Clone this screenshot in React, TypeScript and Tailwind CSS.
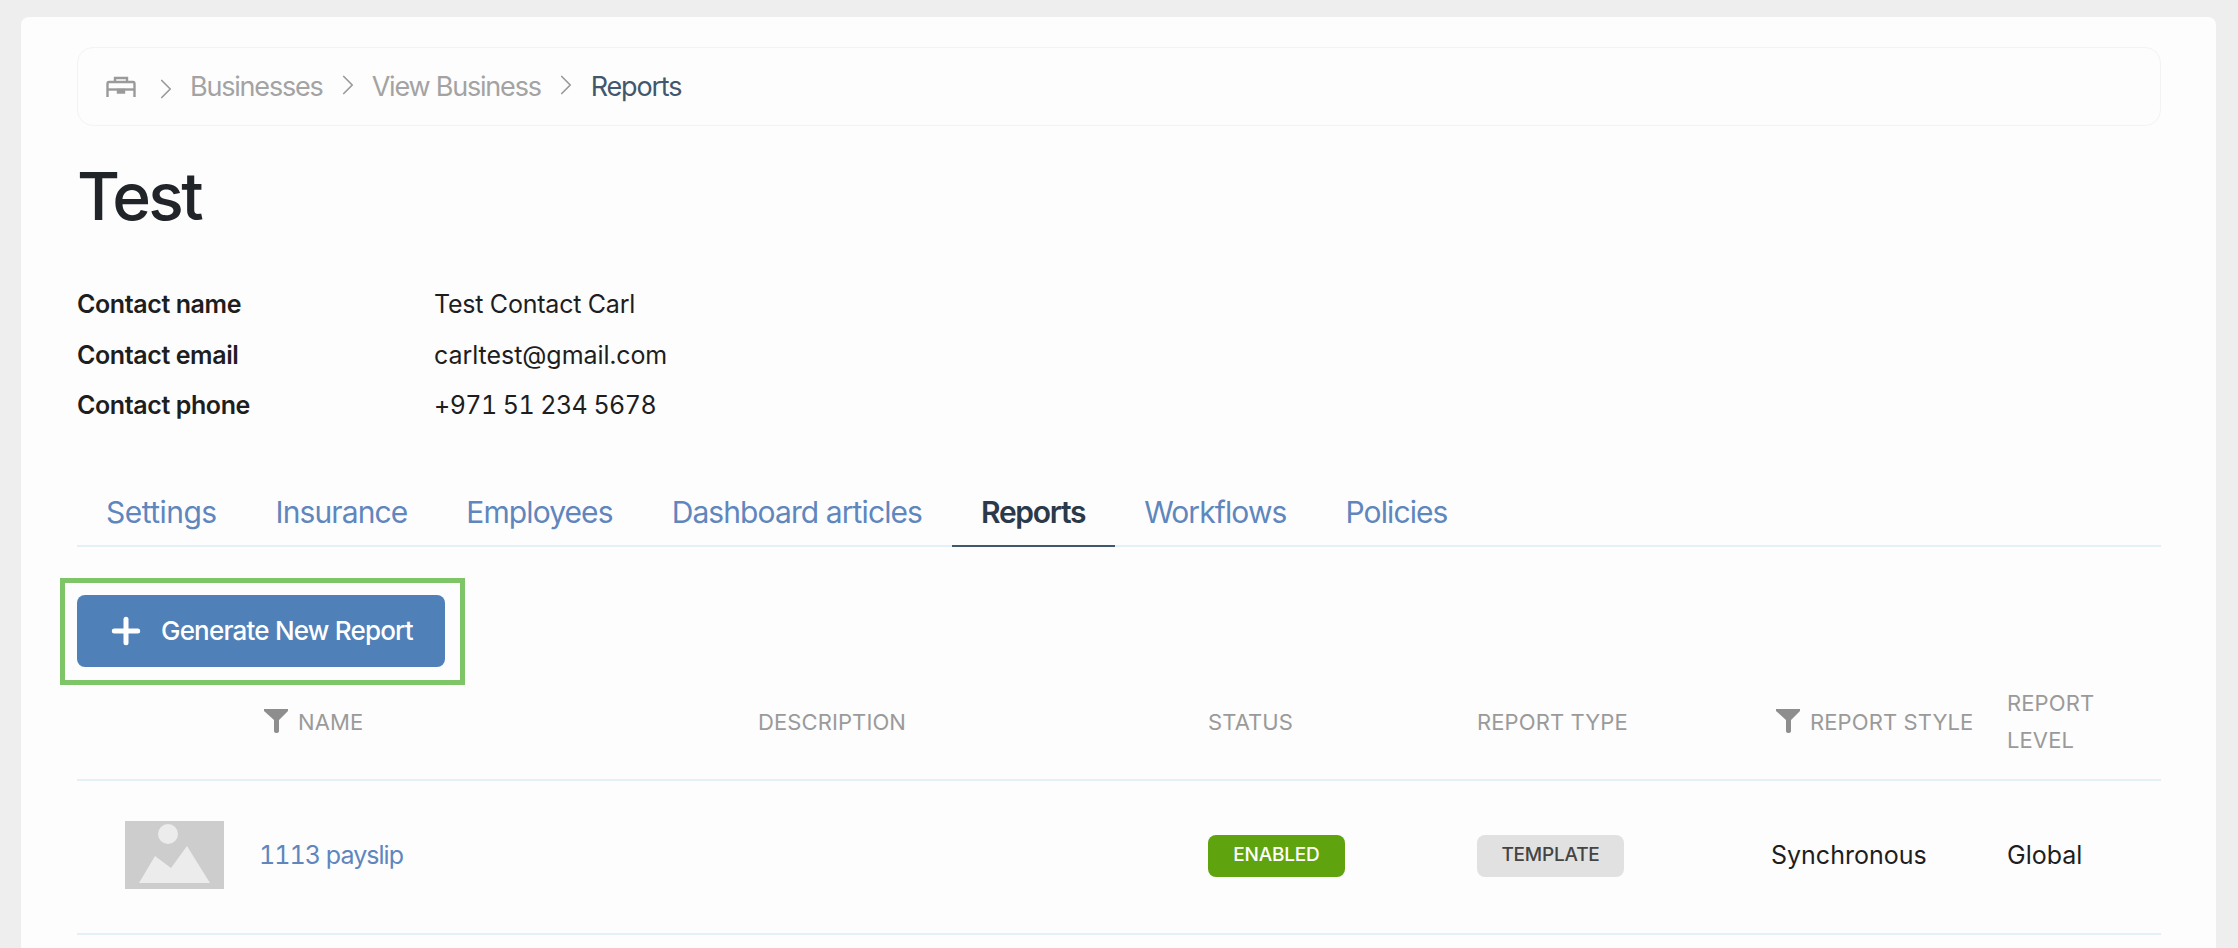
import { ChevronRight, Plus } from "lucide-react";

const tabs = ["Settings", "Insurance", "Employees", "Dashboard articles", "Reports", "Workflows", "Policies"];

const contacts = [
  { label: "Contact name", value: "Test Contact Carl", spacing: "tracking-[-0.2px]" },
  { label: "Contact email", value: "carltest@gmail.com", spacing: "tracking-[-0.05px]" },
  { label: "Contact phone", value: "+971 51 234 5678", spacing: "tracking-[-0.55px]" },
];

function FilterIcon() {
  return (
    <svg viewBox="0 0 24 24" className="h-[24px] w-[24px] shrink-0 -translate-y-[2px] fill-[#8e8e8e]">
      <path d="M0 0h24v2L15 11v11c0 1-1 2-2 2h-1c-1 0-2-1-2-2V11L0 2z" />
    </svg>
  );
}

function BagIcon() {
  return (
    <svg viewBox="0 0 30 22" className="h-[22px] w-[30px] fill-none stroke-[#9a9a9a] stroke-[2.4]">
      <path d="M9 6V2h12v4" />
      <path d="M1.5 21V8c0-1 .5-2 1.5-2h24c1 0 1.5 1 1.5 2v13" />
      <path d="M1.5 13.5h27" />
      <path d="M12 14h6v2.5h-6z" className="fill-[#9a9a9a]" />
    </svg>
  );
}

function Placeholder() {
  return (
    <svg viewBox="0 0 99 68" className="h-[68px] w-[99px]">
      <rect width="99" height="68" fill="#cdcdcd" />
      <circle cx="43" cy="13" r="10" fill="#ececec" />
      <path d="M14 62 L30 35 L46 47 L62 25 L85 62 Z" fill="#ececec" />
    </svg>
  );
}

export default function App() {
  return (
    <div
      className="h-[948px] overflow-hidden bg-[#eeeeee] pt-[17px] pl-[21px] pr-[22px]"
      style={{ fontFamily: "Inter, 'Noto Sans', sans-serif" }}
    >
      <div className="h-[931px] rounded-t-lg bg-[#fdfdfd] pl-[56px] pr-[55px] pt-[30px]">
        <div className="flex h-[79px] items-center rounded-2xl border border-[#f3f3f3] pl-[28px] text-[27px] tracking-[-1.2px] text-[#a3a3a3]">
          <BagIcon />
          <ChevronRight className="ml-[13px] mt-[4px] h-[34px] w-[34px] text-[#9a9a9a]" strokeWidth={1.2} />
          <span className="ml-[7px] pt-[1px]">Businesses</span>
          <ChevronRight className="ml-[8px] -mt-[3px] h-[34px] w-[34px] text-[#9a9a9a]" strokeWidth={1.2} />
          <span className="ml-[7px] pt-[1px]">View Business</span>
          <ChevronRight className="ml-[8px] -mt-[3px] h-[34px] w-[34px] text-[#9a9a9a]" strokeWidth={1.2} />
          <span className="ml-[8px] pt-[1px] text-[#41576e]">Reports</span>
        </div>

        <h1 className="mt-[30px] h-[78px] text-[66px] leading-[80px] font-medium tracking-[-2.7px] text-[#212529]">Test</h1>

        <div className="mt-[45px] grid grid-cols-[357px_1fr] text-[25px] leading-[50.5px] text-[#1e1e1e]">
          {contacts.map((c) => (
            <div key={c.label} className="contents">
              <div className="font-semibold tracking-[-0.4px]">{c.label}</div>
              <div className={`tabular-nums ${c.spacing}`}>{c.value}</div>
            </div>
          ))}
        </div>

        <div className="mt-[50px] flex h-[66px] border-b-2 border-[#e4f0f8] text-[30px] tracking-[-0.9px] text-[#5f86bd]">
          {tabs.map((t) =>
            t === "Reports" ? (
              <div key={t} className="-mb-[2px] flex h-[66px] items-center border-b-2 border-[#41576e] px-[29.5px] font-semibold tracking-[-1.3px] text-[#2b3a4a]">
                {t}
              </div>
            ) : (
              <div key={t} className="flex items-center px-[29.5px] first:pl-[29px] first:tracking-[-0.54px]">
                {t}
              </div>
            ),
          )}
        </div>

        <div className="mt-[48px] flex">
          <div className="relative">
            <button className="flex h-[72px] w-[368px] items-center rounded-lg bg-[#5080b8] pl-[29px] text-[26px] font-medium tracking-[-0.8px] text-white">
              <Plus className="h-[40px] w-[40px]" strokeWidth={3} />
              <span className="ml-[15px]">Generate New Report</span>
            </button>
            <div className="absolute -top-[17px] -left-[17px] -right-[20px] -bottom-[18px] border-[5px] border-[#7dc566]" />
          </div>
        </div>

        <div className="grid h-[114px] grid-cols-[182px_499px_450px_269px_294px_236px_154px] items-center border-b-2 border-[#e4f0f8] text-[22px] tracking-[0.1px] text-[#9a9a9a]">
          <div />
          <div className="flex items-center gap-[10px] pl-[5px]">
            <FilterIcon />
            NAME
          </div>
          <div>DESCRIPTION</div>
          <div>STATUS</div>
          <div>REPORT TYPE</div>
          <div className="flex items-center gap-[10px] pl-[5px]">
            <FilterIcon />
            REPORT STYLE
          </div>
          <div className="-mt-[2px] leading-[37px]">
            REPORT
            <br />
            LEVEL
          </div>
        </div>

        <div className="grid h-[154px] grid-cols-[182px_499px_450px_269px_294px_236px_154px] items-center border-b-2 border-[#e4f0f8] pb-[2px] text-[25px] text-[#1e1e1e]">
          <div className="-mt-[2px] pl-[48px]">
            <Placeholder />
          </div>
          <div className="tabular-nums tracking-[-0.95px] text-[#5f86bd]">1113 payslip</div>
          <div />
          <div>
            <span className="flex h-[42px] w-[137px] items-center justify-center rounded-lg bg-[#5fa40e] text-[19px] font-medium tracking-[-0.2px] text-white">
              ENABLED
            </span>
          </div>
          <div>
            <span className="flex h-[42px] w-[147px] items-center justify-center rounded-lg bg-[#e1e1e1] text-[19px] font-medium tracking-[-0.2px] text-[#444444]">
              TEMPLATE
            </span>
          </div>
          <div>Synchronous</div>
          <div>Global</div>
        </div>
      </div>
    </div>
  );
}
